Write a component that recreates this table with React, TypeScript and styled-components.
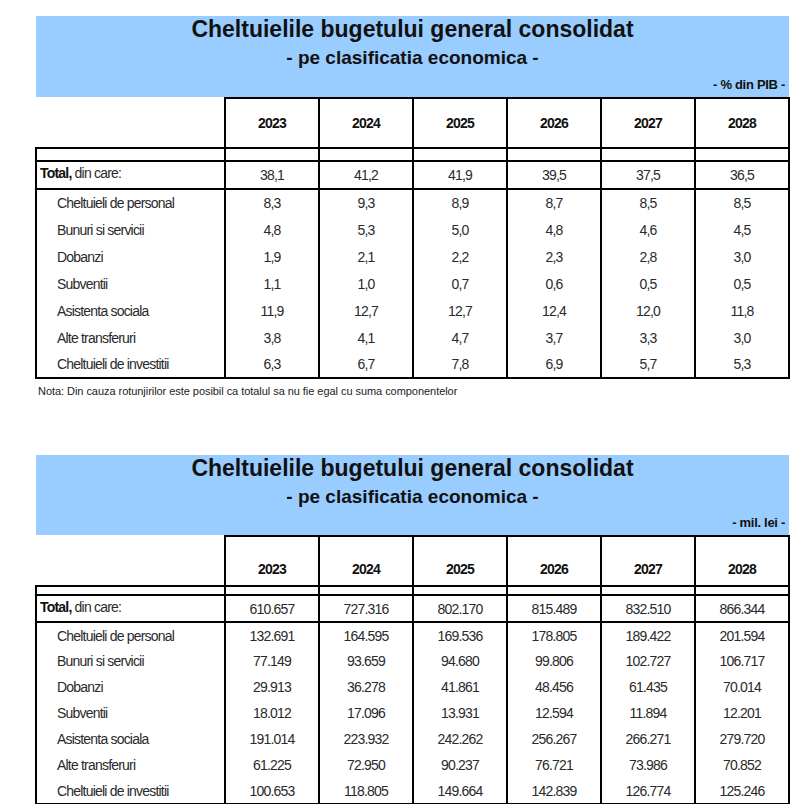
import React from 'react';
import styled, { createGlobalStyle } from 'styled-components';

const GlobalStyle = createGlobalStyle`
  html, body {
    margin: 0;
    padding: 0;
    background: #fff;
  }
  body {
    font-family: "Liberation Sans", Arial, sans-serif;
    color: #222;
  }
`;

const Page = styled.div`
  width: 800px;
  padding: 16px 0 0 35px;
  box-sizing: border-box;
  display: flex;
  flex-direction: column;
`;

const Block = styled.section<{ $top: number }>`
  width: 754px;
  margin-top: ${({ $top }) => $top}px;
`;

const Banner = styled.div<{ $height: number }>`
  background: #99ccff;
  height: ${({ $height }) => $height}px;
  margin-left: 1px;
  display: flex;
  flex-direction: column;
  align-items: center;
  box-sizing: border-box;
  padding-top: 1px;
`;

const Title = styled.div`
  font-weight: bold;
  font-size: 23px;
  line-height: 24px;
  color: #111;
`;

const Subtitle = styled.div`
  font-weight: bold;
  font-size: 19px;
  line-height: 20px;
  margin-top: 7px;
  color: #111;
`;

const Unit = styled.div`
  align-self: flex-end;
  margin-top: auto;
  margin-right: 4px;
  margin-bottom: 5px;
  font-weight: bold;
  font-size: 13px;
  line-height: 14px;
  letter-spacing: -0.3px;
  color: #111;
`;

const Table = styled.table`
  border-collapse: collapse;
  table-layout: fixed;
  width: 754px;
  font-size: 14px;
  letter-spacing: -0.8px;
`;

const Row = styled.tr<{ $h: number }>`
  height: ${({ $h }) => $h}px;
`;

const HeadLabel = styled.th`
  padding: 0;
  border-bottom: 2px solid #000;
`;

const Year = styled.th<{ $bottom: boolean }>`
  padding: 0 0 ${({ $bottom }) => ($bottom ? '8px' : '0')};
  vertical-align: ${({ $bottom }) => ($bottom ? 'bottom' : 'middle')};
  border: 2px solid #000;
  font-weight: bold;
  font-size: 14px;
  color: #111;
`;

const Spacer = styled.td`
  padding: 0;
  border: 2px solid #000;
`;

const Label = styled.td<{ $total?: boolean; $last?: boolean }>`
  padding: ${({ $total }) => ($total ? '0 0 4px 3px' : '0 0 0 20px')};
  white-space: nowrap;
  vertical-align: middle;
  border-left: 2px solid #000;
  border-right: 2px solid #000;
  border-bottom: ${({ $total, $last }) => ($total || $last ? '2px solid #000' : 'none')};
  color: #2a2a2a;
`;

const Value = styled.td<{ $total?: boolean; $last?: boolean }>`
  padding: 0;
  text-align: center;
  vertical-align: middle;
  color: #2a2a2a;
  border-left: 2px solid #000;
  border-right: 2px solid #000;
  border-bottom: ${({ $total, $last }) => ($total || $last ? '2px solid #000' : 'none')};
`;

const Bold = styled.b`
  color: #111;
`;

const Note = styled.div`
  font-size: 11px;
  line-height: 13px;
  letter-spacing: -0.05px;
  margin: 6px 0 0 3px;
  color: #222;
`;

const years = ['2023', '2024', '2025', '2026', '2027', '2028'];

const labels = [
  'Cheltuieli de personal',
  'Bunuri si servicii',
  'Dobanzi',
  'Subventii',
  'Asistenta sociala',
  'Alte transferuri',
  'Cheltuieli de investitii',
];

const pibTotal = ['38,1', '41,2', '41,9', '39,5', '37,5', '36,5'];
const pibRows = [
  ['8,3', '9,3', '8,9', '8,7', '8,5', '8,5'],
  ['4,8', '5,3', '5,0', '4,8', '4,6', '4,5'],
  ['1,9', '2,1', '2,2', '2,3', '2,8', '3,0'],
  ['1,1', '1,0', '0,7', '0,6', '0,5', '0,5'],
  ['11,9', '12,7', '12,7', '12,4', '12,0', '11,8'],
  ['3,8', '4,1', '4,7', '3,7', '3,3', '3,0'],
  ['6,3', '6,7', '7,8', '6,9', '5,7', '5,3'],
];

const leiTotal = ['610.657', '727.316', '802.170', '815.489', '832.510', '866.344'];
const leiRows = [
  ['132.691', '164.595', '169.536', '178.805', '189.422', '201.594'],
  ['77.149', '93.659', '94.680', '99.806', '102.727', '106.717'],
  ['29.913', '36.278', '41.861', '48.456', '61.435', '70.014'],
  ['18.012', '17.096', '13.931', '12.594', '11.894', '12.201'],
  ['191.014', '223.932', '242.262', '256.267', '266.271', '279.720'],
  ['61.225', '72.950', '90.237', '76.721', '73.986', '70.852'],
  ['100.653', '118.805', '149.664', '142.839', '126.774', '125.246'],
];

interface SheetProps {
  unit: string;
  total: string[];
  rows: string[][];
  bannerHeight: number;
  spacerHeight: number;
  totalHeight: number;
  rowHeight: number;
  yearsAtBottom: boolean;
}

const Sheet: React.FC<SheetProps> = ({
  unit,
  total,
  rows,
  bannerHeight,
  spacerHeight,
  totalHeight,
  rowHeight,
  yearsAtBottom,
}) => (
  <>
    <Banner $height={bannerHeight}>
      <Title>Cheltuielile bugetului general consolidat</Title>
      <Subtitle>- pe clasificatia economica -</Subtitle>
      <Unit>{unit}</Unit>
    </Banner>
    <Table>
      <colgroup>
        <col style={{ width: 189 }} />
        {years.map(y => (
          <col key={y} style={{ width: 94 }} />
        ))}
      </colgroup>
      <thead>
        <Row $h={50}>
          <HeadLabel />
          {years.map(y => (
            <Year key={y} $bottom={yearsAtBottom}>
              {y}
            </Year>
          ))}
        </Row>
      </thead>
      <tbody>
        <Row $h={spacerHeight}>
          <Spacer />
          {years.map(y => (
            <Spacer key={y} />
          ))}
        </Row>
        <Row $h={totalHeight}>
          <Label $total>
            <Bold>Total,</Bold> din care:
          </Label>
          {total.map((v, i) => (
            <Value key={i} $total>
              {v}
            </Value>
          ))}
        </Row>
        {rows.map((row, r) => (
          <Row key={labels[r]} $h={rowHeight}>
            <Label $last={r === rows.length - 1}>{labels[r]}</Label>
            {row.map((v, i) => (
              <Value key={i} $last={r === rows.length - 1}>
                {v}
              </Value>
            ))}
          </Row>
        ))}
      </tbody>
    </Table>
  </>
);

const App: React.FC = () => (
  <>
    <GlobalStyle />
    <Page>
      <Block $top={0}>
        <Sheet
          unit="- % din PIB -"
          total={pibTotal}
          rows={pibRows}
          bannerHeight={81}
          spacerHeight={13}
          totalHeight={28}
          rowHeight={27}
          yearsAtBottom={false}
        />
        <Note>Nota: Din cauza rotunjirilor este posibil ca totalul sa nu fie egal cu suma componentelor</Note>
      </Block>
      <Block $top={57}>
        <Sheet
          unit="- mil. lei -"
          total={leiTotal}
          rows={leiRows}
          bannerHeight={80}
          spacerHeight={9}
          totalHeight={27}
          rowHeight={26}
          yearsAtBottom
        />
      </Block>
    </Page>
  </>
);

export default App;
